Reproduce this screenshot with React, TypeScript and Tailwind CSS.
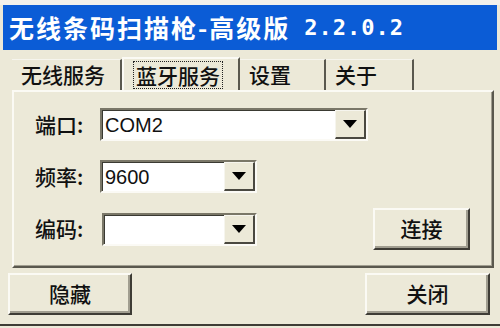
import React from 'react';

const cjk = { fontFamily: '"Noto Sans CJK SC", "Liberation Sans", sans-serif' };

function Arrow() {
  return (
    <svg width="14" height="8" viewBox="0 0 14 8">
      <path d="M0 0 H14 L7 8 Z" fill="#000" />
    </svg>
  );
}

function Combo({ value, width }: { value: string; width: string }) {
  return (
    <div
      className={`${width} h-[33px] flex bg-white border-2 border-t-[#7a7768] border-l-[#7a7768] border-b-[#fbfaf5] border-r-[#fbfaf5] shadow-[inset_1px_1px_0_#3a3a32]`}
    >
      <div className="flex-1 pl-[3px] flex items-center text-[20px] text-[#111]" style={{ fontFamily: '"Liberation Sans", Arial, sans-serif' }}>
        {value}
      </div>
      <div className="w-[31px] h-full bg-[#ece9d8] flex items-center justify-center border-b-2 border-r-2 border-b-[#4a4840] border-r-[#4a4840] border-t border-l border-t-[#f6f5ee] border-l-[#f6f5ee]">
        <Arrow />
      </div>
    </div>
  );
}

function Btn({ label, className }: { label: string; className: string }) {
  return (
    <div
      className={`${className} flex items-center justify-center text-[21px] font-medium text-[#111] bg-[#ece9d8] border-2 border-t-[#fbfaf4] border-l-[#fbfaf4] border-b-[#3e3c35] border-r-[#3e3c35] shadow-[inset_-2px_-2px_0_#a19e90]`}
      style={cjk}
    >
      {label}
    </div>
  );
}

export default function App() {
  const tabs = [
    { label: '无线服务', w: 'w-[110px]' },
    { label: '蓝牙服务', w: 'w-[118px]', active: true },
    { label: '设置', w: 'w-[86px]' },
    { label: '关于', w: 'w-[88px]' },
  ];

  return (
    <div className="w-[500px] h-[328px] bg-[#ece9d8] flex flex-col overflow-hidden" style={cjk}>
      <div className="h-[5px] bg-[#f2f1ec]" />
      {/* Title bar */}
      <div className="h-[45px] ml-[3px] mr-[3px] bg-[#0b5cd6] flex items-center pl-[6px] text-white font-bold">
        <span className="text-[25px] tracking-[2px]">无线条码扫描枪-高级版</span>
        <span className="ml-[14px] text-[22px] tracking-[1px]" style={{ fontFamily: '"DejaVu Sans Mono", monospace' }}>
          2.2.0.2
        </span>
      </div>

      {/* Tabs */}
      <div className="mt-[7px] h-[33px] flex items-end pl-[12px]">
        {tabs.map((t) => (
          <div
            key={t.label}
            className={`${t.w} h-[31px] flex items-center pl-[9px] text-[21px] font-medium text-[#111] border-r-2 border-r-[#5a584e] ${
              t.active ? 'h-[33px] border-l-2 border-l-[#fbfaf4] border-t-2 border-t-[#fbfaf4]' : 'border-t border-t-[#f6f5ee]'
            }`}
          >
            {t.active ? (
              <span className="border border-dotted border-[#222] px-[2px] leading-[26px]">{t.label}</span>
            ) : (
              t.label
            )}
          </div>
        ))}
      </div>

      {/* Panel */}
      <div className="ml-[12px] w-[482px] h-[178px] border-2 border-t-[#fbfaf4] border-l-[#fbfaf4] border-b-[#5a584e] border-r-[#5a584e] shadow-[inset_-1px_-1px_0_#a19e90] pl-[21px] pt-[16px] flex flex-col gap-[19px] text-[21px] font-medium text-[#111]">
        <div className="flex items-center">
          <span className="w-[65px]">端口:</span>
          <Combo value="COM2" width="w-[268px]" />
        </div>
        <div className="flex items-center">
          <span className="w-[65px]">频率:</span>
          <Combo value="9600" width="w-[157px]" />
        </div>
        <div className="flex items-center justify-between pr-[22px] -mt-[4px]">
          <div className="flex items-center">
            <span className="w-[67px]">编码:</span>
            <Combo value="" width="w-[155px]" />
          </div>
          <Btn label="连接" className="w-[97px] h-[42px]" />
        </div>
      </div>

      {/* Bottom buttons */}
      <div className="mt-[5px] flex justify-between pl-[8px] pr-[10px]">
        <Btn label="隐藏" className="w-[124px] h-[42px]" />
        <Btn label="关闭" className="w-[125px] h-[42px]" />
      </div>
      <div className="mt-[9px] h-[2px] bg-[#3e3c35]" />
    </div>
  );
}
